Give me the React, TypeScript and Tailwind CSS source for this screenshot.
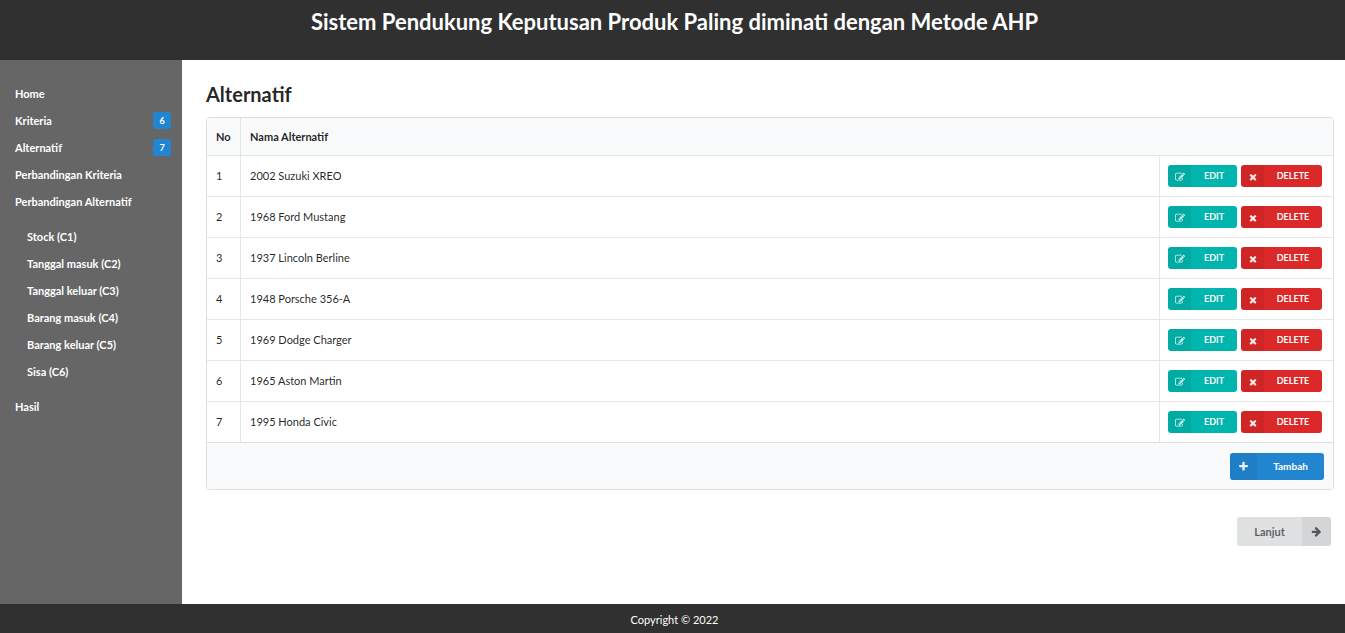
import type { ReactNode } from "react";

const ICONS = {
  plus: "M1600 736v192q0 40-28 68t-68 28h-416v416q0 40-28 68t-68 28h-192q-40 0-68-28t-28-68v-416h-416q-40 0-68-28t-28-68v-192q0-40 28-68t68-28h416v-416q0-40 28-68t68-28h192q40 0 68 28t28 68v416h416q40 0 68 28t28 68z",
  times:
    "M1490 1322q0 40-28 68l-136 136q-28 28-68 28t-68-28l-294-294-294 294q-28 28-68 28t-68-28l-136-136q-28-28-28-68t28-68l294-294-294-294q-28-28-28-68t28-68l136-136q28-28 68-28t68 28l294 294 294-294q28-28 68-28t68 28l136 136q28 28 28 68t-28 68l-294 294 294 294q28 28 28 68z",
  arrow:
    "M1600 960q0 54-37 91l-651 651q-39 37-91 37-51 0-90-37l-75-75q-38-38-38-91t38-91l293-293h-704q-52 0-84.5-37.5t-32.5-90.5v-128q0-53 32.5-90.5t84.5-37.5h704l-293-294q-38-36-38-90t38-90l75-75q38-38 90-38 53 0 91 38l651 651q37 35 37 90z",
  edit: "M888 1184l116-116-152-152-116 116v56h96v96h56zm440-720q-16-16-33 1l-350 350q-17 17-1 33t33-1l350-350q17-17 1-33zm80 594v190q0 119-84.5 203.5t-203.5 84.5h-832q-119 0-203.5-84.5t-84.5-203.5v-832q0-119 84.5-203.5t203.5-84.5h832q63 0 117 25 15 7 18 23 3 17-9 29l-49 49q-14 14-32 8-23-6-45-6h-832q-66 0-113 47t-47 113v832q0 66 47 113t113 47h832q66 0 113-47t47-113v-126q0-13 9-22l64-64q15-15 35-7t20 29zm-96-738l288 288-672 672h-288v-288zm444 132l-92 92-288-288 92-92q28-28 68-28t68 28l152 152q28 28 28 68t-28 68z",
};

function Icon({ name, className }: { name: keyof typeof ICONS; className: string }) {
  return (
    <svg viewBox="0 0 1792 1792" fill="currentColor" aria-hidden="true" className={className}>
      <path d={ICONS[name]} />
    </svg>
  );
}

const alternatives = [
  "2002 Suzuki XREO",
  "1968 Ford Mustang",
  "1937 Lincoln Berline",
  "1948 Porsche 356-A",
  "1969 Dodge Charger",
  "1965 Aston Martin",
  "1995 Honda Civic",
];

const criteria = [
  "Stock (C1)",
  "Tanggal masuk (C2)",
  "Tanggal keluar (C3)",
  "Barang masuk (C4)",
  "Barang keluar (C5)",
  "Sisa (C6)",
];

function NavItem({ children, count }: { children: ReactNode; count?: number }) {
  return (
    <li>
      <a href="#" className="flex h-[27px] items-center justify-between">
        <span>{children}</span>
        {count !== undefined && (
          <span className="flex h-[17px] w-[18px] items-center justify-center rounded-[3px] bg-[#2185d0] text-[9px]">
            {count}
          </span>
        )}
      </a>
    </li>
  );
}

function SmallButton({ kind }: { kind: "edit" | "delete" }) {
  const edit = kind === "edit";
  return (
    <button
      type="button"
      className={`flex h-[22px] items-stretch overflow-hidden rounded-[3px] text-[9px] font-bold text-white ${
        edit ? "w-[69px] bg-[#00b5ad]" : "w-[81px] bg-[#db2828]"
      }`}
    >
      <span className="flex w-[23px] shrink-0 items-center justify-center bg-black/5 pt-px">
        <Icon name={edit ? "edit" : "times"} className="size-[10px] opacity-90" />
      </span>
      <span className="flex flex-1 items-center justify-center">{edit ? "EDIT" : "DELETE"}</span>
    </button>
  );
}

export default function App() {
  return (
    <div className="flex min-h-screen flex-col bg-white font-['Lato',sans-serif] text-[11px] leading-4 text-black/87">
      <header className="h-[60px] bg-[#303030] pt-2 pl-1 text-center">
        <h1 className="text-[22px] leading-7 font-bold text-white">
          Sistem Pendukung Keputusan Produk Paling diminati dengan Metode AHP
        </h1>
      </header>

      <div className="flex flex-1">
        <nav className="w-[182px] shrink-0 bg-[#666] pt-5 pr-[11px] pl-[15px] font-bold text-white">
          <ul>
            <NavItem>Home</NavItem>
            <NavItem count={6}>Kriteria</NavItem>
            <NavItem count={alternatives.length}>Alternatif</NavItem>
            <NavItem>Perbandingan Kriteria</NavItem>
            <NavItem>Perbandingan Alternatif</NavItem>
            <li className="py-2 pl-3">
              <ul>
                {criteria.map((c) => (
                  <NavItem key={c}>{c}</NavItem>
                ))}
              </ul>
            </li>
            <NavItem>Hasil</NavItem>
          </ul>
        </nav>

        <main className="min-w-0 flex-1 pt-[22px] pr-[11px] pl-6">
          <h2 className="mb-[11px] text-[20px] leading-6 font-bold">Alternatif</h2>

          <div className="overflow-hidden rounded-[4px] border border-[#dedede]">
            <table className="w-full border-separate border-spacing-0 text-left">
              <thead className="bg-[#f9fafb]">
                <tr className="h-[38px]">
                  <th className="w-[34px] border-r border-b border-[#e3e4e4] pl-[9px]">No</th>
                  <th colSpan={2} className="border-b border-[#e3e4e4] pl-[9px]">
                    Nama Alternatif
                  </th>
                </tr>
              </thead>
              <tbody>
                {alternatives.map((name, i) => (
                  <tr key={name} className="group h-[41px]">
                    <td className="border-r border-b border-[#e6e6e6] pl-[9px] group-last:border-b-[#dedede]">
                      {i + 1}
                    </td>
                    <td className="border-r border-b border-[#e6e6e6] pl-[9px] group-last:border-b-[#dedede]">
                      {name}
                    </td>
                    <td className="w-[173px] border-b border-[#e6e6e6] pl-2 group-last:border-b-[#dedede]">
                      <div className="flex gap-1">
                        <SmallButton kind="edit" />
                        <SmallButton kind="delete" />
                      </div>
                    </td>
                  </tr>
                ))}
              </tbody>
              <tfoot className="bg-[#f9fafb]">
                <tr className="h-[46px]">
                  <td colSpan={3} className="pr-[9px]">
                    <button
                      type="button"
                      className="ml-auto flex h-[27px] w-[94px] items-stretch overflow-hidden rounded-[3px] bg-[#2185d0] text-[10px] font-bold text-white"
                    >
                      <span className="flex w-[27px] items-center justify-center bg-black/5">
                        <Icon name="plus" className="size-[11px] opacity-90" />
                      </span>
                      <span className="flex flex-1 items-center justify-center">Tambah</span>
                    </button>
                  </td>
                </tr>
              </tfoot>
            </table>
          </div>

          <div className="mt-[27px] flex justify-end pr-[3px]">
            <button
              type="button"
              className="flex h-[29px] w-[94px] items-stretch overflow-hidden rounded-[3px] bg-[#e0e1e2] text-[11px] font-bold text-black/60"
            >
              <span className="flex flex-1 items-center justify-center">Lanjut</span>
              <span className="flex w-[29px] items-center justify-center bg-black/5">
                <Icon name="arrow" className="size-[11px]" />
              </span>
            </button>
          </div>
        </main>
      </div>

      <footer className="flex h-[29px] items-center justify-center bg-[#303030] pt-[2px] pl-1 text-white">
        Copyright © 2022
      </footer>
    </div>
  );
}
